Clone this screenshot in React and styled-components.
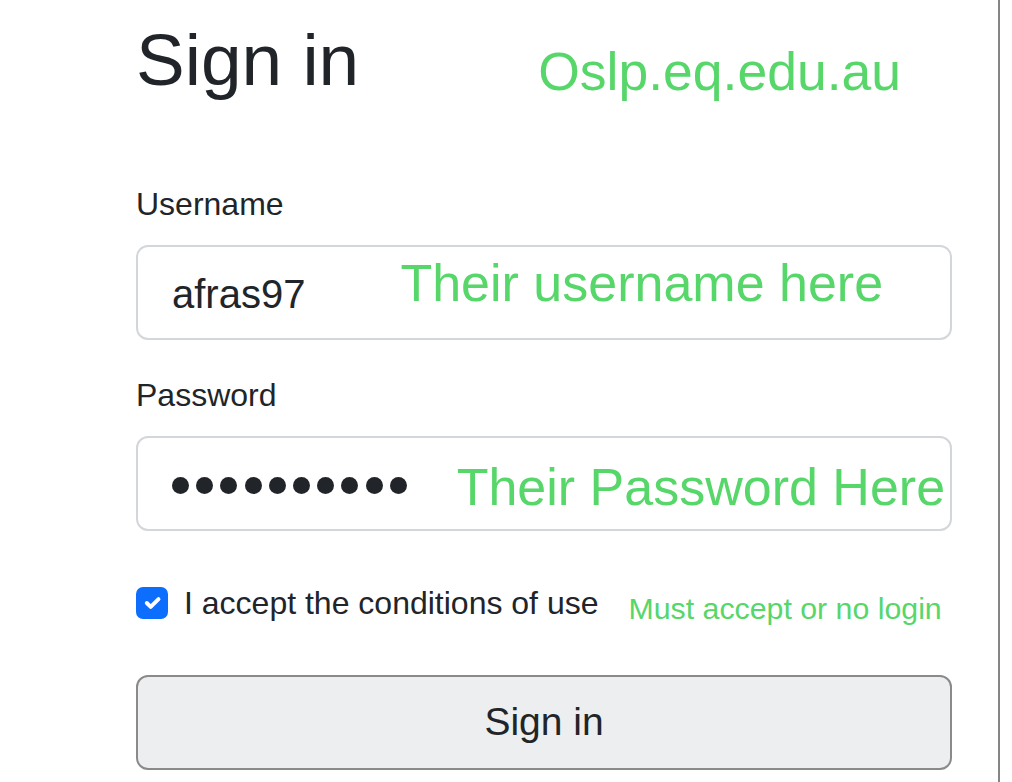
import styled, { createGlobalStyle } from "styled-components";

const GlobalStyle = createGlobalStyle`
  html, body {
    margin: 0;
    padding: 0;
    background: #ffffff;
  }
  body {
    font-family: "Liberation Sans", Arial, Helvetica, sans-serif;
    color: #212529;
  }
`;

const noteGreen = "#57d66a";

const Page = styled.div`
  box-sizing: border-box;
  width: 1000px;
  min-height: 100vh;
  border-right: 2px solid #858585;
  overflow: hidden;
`;
const FormColumn = styled.div`
  width: 816px;
  margin-left: 136px;
  display: flex;
  flex-direction: column;
`;
const HeaderRow = styled.div`
  display: flex;
  align-items: flex-start;
  margin-top: 16px;
`;
const Title = styled.h1`
  margin: 0;
  font-size: 73px;
  font-weight: 400;
  line-height: 1.2;
  white-space: nowrap;
`;
const Note = styled.span`
  font-size: ${(p) => p.$size || 52}px;
  line-height: 1.2;
  color: ${noteGreen};
  white-space: nowrap;
  margin-left: ${(p) => p.$left || 0}px;
  margin-top: ${(p) => p.$top || 0}px;
`;
const Label = styled.label`
  display: block;
  font-size: 32px;
  line-height: 1.5;
  margin-top: ${(p) => p.$top}px;
  margin-bottom: 17px;
`;
const Field = styled.div`
  box-sizing: border-box;
  height: 95px;
  display: flex;
  align-items: flex-start;
  padding: 0 30px 0 34px;
  border: 2px solid #d3d6da;
  border-radius: 12px;
  background: #ffffff;
`;
const Value = styled.span`
  align-self: center;
  font-size: 40px;
  line-height: 1.5;
  margin-top: 3px;
`;
const Dots = styled.div`
  align-self: center;
  display: flex;
  gap: 7.2px;
  margin-top: 4px;
`;
const Dot = styled.span`
  width: 17px;
  height: 17px;
  border-radius: 50%;
  background: #212529;
`;
const CheckRow = styled.div`
  display: flex;
  align-items: flex-start;
  margin-top: 56px;
`;
const CheckBox = styled.span`
  flex: none;
  width: 32px;
  height: 32px;
  border-radius: 7px;
  background: #0d6efd;
  display: flex;
  align-items: center;
  justify-content: center;
`;
const CheckLabel = styled.span`
  font-size: 32px;
  line-height: 1;
  margin-left: 16px;
  white-space: nowrap;
`;
const SubmitButton = styled.button`
  box-sizing: border-box;
  height: 95px;
  margin-top: 47px;
  font-family: inherit;
  font-size: 39px;
  color: #212529;
  background: #edeef0;
  border: 2px solid #8a8a8a;
  border-radius: 12px;
`;

const App = () => {
  return (
    <Page>
      <GlobalStyle />
      <FormColumn>
        <HeaderRow>
          <Title>Sign in</Title>
          <Note $size={53.5} $left={179} $top={24}>
            Oslp.eq.edu.au
          </Note>
        </HeaderRow>

        <Label $top={76}>Username</Label>
        <Field>
          <Value>afras97</Value>
          <Note $left={95} $top={5}>
            Their username here
          </Note>
        </Field>

        <Label $top={31}>Password</Label>
        <Field>
          <Dots>
            {Array(10)
              .fill()
              .map((_, idx) => (
                <Dot key={idx} />
              ))}
          </Dots>
          <Note $left={50} $top={18}>
            Their Password Here
          </Note>
        </Field>

        <CheckRow>
          <CheckBox>
            <svg width="26" height="26" viewBox="0 0 20 20">
              <path
                d="m6 10 3 3 6-6"
                fill="none"
                stroke="#fff"
                strokeWidth="3"
                strokeLinecap="round"
                strokeLinejoin="round"
              />
            </svg>
          </CheckBox>
          <CheckLabel>I accept the conditions of use</CheckLabel>
          <Note $size={30.3} $left={30} $top={4}>
            Must accept or no login
          </Note>
        </CheckRow>

        <SubmitButton>Sign in</SubmitButton>
      </FormColumn>
    </Page>
  );
};

export default App;
